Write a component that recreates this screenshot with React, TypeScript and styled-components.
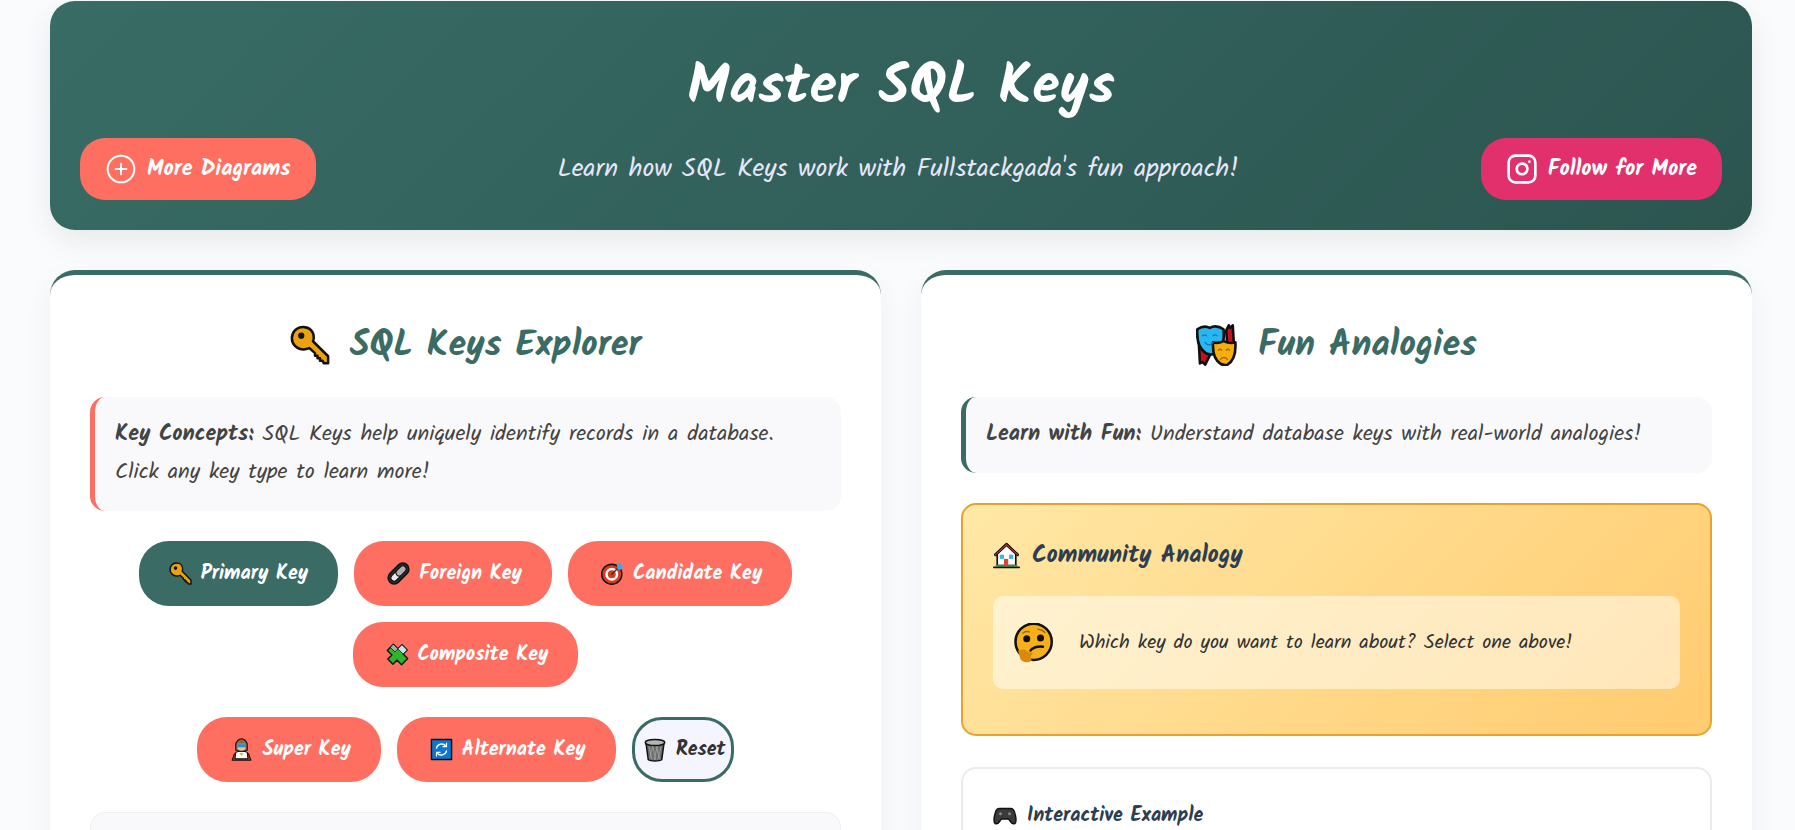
import type { ReactNode } from 'react'
import styled, { createGlobalStyle } from 'styled-components'
import { CirclePlus, Instagram } from 'lucide-react'

const GlobalStyle = createGlobalStyle`
  html, body {
    margin: 0;
    height: 830px;
    overflow: hidden;
    background: #fafbfd;
    font-family: "Kalam", "Lato", "Open Sans", sans-serif;
    color: #444;
  }
  * { box-sizing: border-box; }
`

const Page = styled.div`
  padding: 1px 43px 0 50px;
`

const Header = styled.header`
  height: 229px;
  margin-bottom: 40px;
  padding: 0 30px 30px;
  border-radius: 25px;
  background: linear-gradient(135deg, #386c65 0%, #2c5550 100%);
  box-shadow: 0 10px 30px rgba(0, 0, 0, 0.08);
  display: flex;
  flex-direction: column;
  justify-content: flex-end;
`

const Title = styled.h1`
  margin: 0 0 16px;
  text-align: center;
  color: #fff;
  font-size: 56px;
  line-height: 68px;
  font-weight: 700;
`

const HeaderRow = styled.div`
  display: flex;
  align-items: center;
  justify-content: space-between;
`

const NavLink = styled.a<{ $bg: string }>`
  display: flex;
  align-items: center;
  gap: 10px;
  height: 62px;
  padding: 0 25px;
  border-radius: 25px;
  background: ${p => p.$bg};
  color: #fff;
  font-size: 22px;
  font-weight: 700;
  white-space: nowrap;
`

const Subtitle = styled.p`
  margin: 0;
  color: #e6e6fa;
  font-size: 26px;
`

const Columns = styled.div`
  display: grid;
  grid-template-columns: 1fr 1fr;
  gap: 40px;
`

const Card = styled.section`
  height: 900px;
  padding: 40px;
  border-top: 5px solid #3a6b65;
  border-radius: 25px;
  background: #fff;
  box-shadow: 0 10px 30px rgba(0, 0, 0, 0.05);
`

const CardTitle = styled.h2`
  display: flex;
  align-items: center;
  justify-content: center;
  gap: 20px;
  height: 60px;
  margin: 0 0 22px;
  color: #3a6b65;
  font-size: 36px;
  font-weight: 700;
`

const Note = styled.p<{ $accent: string }>`
  margin: 0 0 30px;
  padding: 19px 20px;
  border-left: 5px solid ${p => p.$accent};
  border-radius: 15px;
  background: #f9f9fb;
  font-size: 22px;
  line-height: 38px;
`

const ButtonGroup = styled.div`
  display: flex;
  flex-wrap: wrap;
  justify-content: center;
  gap: 16px;
  margin-bottom: 30px;
`

const KeyButton = styled.button<{ $active?: boolean }>`
  display: flex;
  align-items: center;
  gap: 9px;
  height: 65px;
  padding: 0 30px 0 ${p => (p.$active ? '30px' : '33px')};
  border: 0;
  border-radius: 30px;
  background: ${p => (p.$active ? '#3a6b65' : '#ff6f61')};
  color: #fff;
  font: inherit;
  font-size: 20px;
  font-weight: 700;
  white-space: nowrap;
`

const ResetButton = styled(KeyButton)`
  padding: 0 5px 0 8px;
  border: 3px solid #3a6b65;
  background: #f5f5ff;
  color: #333;
`

const ExplainPanel = styled.div`
  height: 300px;
  border: 1px solid #eef0f4;
  border-radius: 15px;
  background: #f9f9fb;
`

const AnalogyCard = styled.div`
  height: 233px;
  margin-bottom: 31px;
  padding: 30px;
  border: 2px solid #e9a22f;
  border-radius: 15px;
  background: linear-gradient(135deg, #ffe8a6 0%, #ffcb6f 100%);
`

const AnalogyTitle = styled.h3`
  display: flex;
  align-items: center;
  gap: 12px;
  height: 40px;
  margin: 0 0 21px;
  color: #2c3e50;
  font-size: 24px;
  font-weight: 700;
`

const Bubble = styled.div`
  display: flex;
  align-items: center;
  gap: 26px;
  height: 93px;
  padding: 0 20px;
  border-radius: 10px;
  background: rgba(255, 255, 255, 0.5);
  color: #333;
  font-size: 20px;
`

const ExampleCard = styled.div`
  height: 300px;
  padding: 32px 30px;
  border: 2px solid #e9ecef;
  border-radius: 15px;
  background: #fff;
`

const ExampleTitle = styled.h4`
  display: flex;
  align-items: center;
  gap: 10px;
  height: 30px;
  margin: 0;
  color: #2c3e50;
  font-size: 20px;
  font-weight: 700;
`

const Ink = styled.svg`
  flex: none;
  display: block;
  stroke: #111;
  stroke-width: 2;
  stroke-linejoin: round;
  stroke-linecap: round;
`

const Glyph = ({ size, children }: { size: number; children: ReactNode }) => (
  <Ink width={size} height={size} viewBox="0 0 32 32" fill="none">{children}</Ink>
)

const KeyIcon = ({ size = 23 }: { size?: number }) => (
  <Glyph size={size}>
    <path fill="#eaa30e" d="M10.5 1.500C15.500 1.500 19 5 19 10c0 1-.2 2-.6 3L30.500 25v5.500h-3.500l-1-2h-2v-2h-2v-2h-2v-2l-4.500-4c-1.500.6-3 1-4.500 1C5 19.500 1.500 15 1.500 10.500 1.500 6 5 1.500 10.500 1.500Z" />
    <circle cx="9" cy="8.500" r="1.500" fill="#111" />
  </Glyph>
)

const LinkIcon = ({ size = 23 }: { size?: number }) => (
  <Glyph size={size}>
    <g transform="rotate(-45 16 16)">
      <rect x="-1" y="7.500" width="34" height="17" rx="8.500" fill="#2a2a2a" />
      <rect x="3" y="11.500" width="16" height="9" rx="4.500" fill="#e8e8e8" strokeWidth="1.500" />
      <rect x="13" y="11.500" width="16" height="9" rx="4.500" fill="#b0b0b0" strokeWidth="1.500" />
    </g>
  </Glyph>
)

const TargetIcon = ({ size = 23 }: { size?: number }) => (
  <Glyph size={size}>
    <circle cx="15" cy="17" r="14" fill="#d9391e" />
    <circle cx="15" cy="17" r="9" fill="#fff" stroke="none" />
    <circle cx="15" cy="17" r="5.500" fill="#d9391e" stroke="none" />
    <path d="M15 17 25 7" stroke="#333" />
    <path fill="#3aa9e8" stroke="none" d="M22 4l5-3 1 4 3 1-4 5-4-1z" />
  </Glyph>
)

const PuzzleIcon = ({ size = 23 }: { size?: number }) => (
  <Glyph size={size}>
    <g transform="rotate(45 16 16)">
      <path fill="#2fb52a" d="M11 2h10v8h9v12h-9v8H11v-8H2V10h9z" />
      <path fill="#cfe0e6" strokeWidth="1" d="M11 2h10v8H11z" />
      <path fill="#9fb0a8" strokeWidth="1" d="M2 10h9v6H2z" />
    </g>
  </Glyph>
)

const HeroIcon = ({ size = 23 }: { size?: number }) => (
  <Glyph size={size}>
    <path fill="#d8352a" strokeWidth="1.500" d="M6 22 3 31h26l-3-9z" />
    <path fill="#fff" strokeWidth="1.500" d="M8 20c4-2 12-2 16 0l1 9H7z" />
    <path fill="#e8b020" stroke="none" d="M13 21h6l-3 4z" />
    <path fill="#9a6238" strokeWidth="1.500" d="M8 10c0-5 4-9 8-9s8 4 8 9v7c-1 1-2 1-3 1H11c-1 0-2 0-3-1z" />
    <path fill="#efc096" stroke="none" d="M10.500 8h11v7c-2 3.500-9 3.500-11 0z" />
    <path fill="#2a8fd6" stroke="none" d="M10 8.500h12v4.500H10z" />
  </Glyph>
)

const ArrowsIcon = ({ size = 23 }: { size?: number }) => (
  <Glyph size={size}>
    <rect x="2" y="2" width="28" height="28" fill="#0a78d2" />
    <path d="M9 14a7.500 7.500 0 0 1 13-3M23 18a7.500 7.500 0 0 1-13 3" stroke="#fff" />
    <path d="M23 7v5h-5M9 25v-5h5" stroke="#fff" strokeWidth="1.500" />
  </Glyph>
)

const BinIcon = ({ size = 24 }: { size?: number }) => (
  <Glyph size={size}>
    <path fill="#6d6d6d" d="M4 7l3 22c3 2 15 2 18 0l3-22z" />
    <path stroke="#a5a5a5" strokeWidth="1" d="M8 12l4 16M13 11l4 18M18 11l4 17M24 12l-4 16M19 11l-4 18M13 11l-4 16" />
    <ellipse cx="16" cy="6" rx="13" ry="4" fill="#b5b5b5" />
  </Glyph>
)

const MasksIcon = ({ size = 42 }: { size?: number }) => (
  <Glyph size={size}>
    <path fill="#c8101f" d="M2 11 3 30l2-1 2 2 4-8zM23 5l2-4 1 2 2-2 1 17h-5z" />
    <path fill="#2ab7f0" d="M1 4C4 2 7 1 10.500 3 14 1 18 2 21 4c.5 8 0 14-5 18-2 1.500-6 1.500-8 .5C2 19 .5 11 1 4Z" />
    <path fill="#f6ae0c" d="M13 14c3 1 5 .5 8-1 3 1.500 6 2 9 1 .5 8-1 14-6 17-2 .5-3 .5-5-.5-5-3-6.500-9-6-16.500Z" />
    <path stroke="#0a78c8" strokeWidth="1" d="M5 9c1-1 2-1 3 0M13 9c1-1 2-1 3 0M7 14c1 2 4 3 6 0" />
    <path stroke="#a86a00" strokeWidth="1" d="M17 20c1-1 2-1 2.500 0M23 20c1-1 2-1 2.500 0M18.500 27c1.500-2 4-2 5.500 0" />
  </Glyph>
)

const HouseIcon = ({ size = 27 }: { size?: number }) => (
  <Glyph size={size}>
    <path fill="#fff" d="M5 13v15h22V13L16 2z" />
    <path stroke="#111" strokeWidth="3.500" d="M3 15 16 3l13 12" />
    <path stroke="#c0392b" strokeWidth="1.300" d="M3 15 16 3l13 12" />
    <path d="M1 30h30" stroke="#111" strokeWidth="2" />
    <path d="M4 28h24" stroke="#2d9c43" strokeWidth="2" />
    <rect x="8" y="15" width="5" height="5" fill="#39b6e6" stroke="none" />
    <rect x="19" y="15" width="5" height="5" fill="#39b6e6" stroke="none" />
    <rect x="13" y="20" width="5" height="8" fill="#e0442c" stroke="none" />
  </Glyph>
)

const ThinkingIcon = ({ size = 40 }: { size?: number }) => (
  <Glyph size={size}>
    <circle cx="16.500" cy="15" r="14.500" fill="#f6b11a" />
    <path stroke="#a06a00" strokeWidth="1.200" d="M8 8c1.500-1.500 3-1.500 5-1M20 5c2 0 4 1 5.500 2.500" />
    <circle cx="11" cy="12.500" r="1.800" fill="#111" />
    <circle cx="22" cy="12" r="1.800" fill="#111" />
    <path strokeWidth="2" d="M14 22c1-2 6-4 10-3" />
    <path fill="#d8890f" stroke="none" d="M4 22l5-1 3 2 4 1-2 3 1 3c-2 2-7 2-9-1z" />
  </Glyph>
)

const GamepadIcon = ({ size = 24 }: { size?: number }) => (
  <Glyph size={size}>
    <path fill="#3b3b3b" d="M8 6h16c3 0 5 4 6 10 1 5 1 9-1 10-2 1-4 0-6-3-1-2-2-3-3-3h-8c-1 0-2 1-3 3-2 3-4 4-6 3-2-1-2-5-1-10C3 10 5 6 8 6Z" />
    <circle cx="10" cy="13" r="2" fill="#888" stroke="none" />
    <circle cx="22" cy="13" r="2" fill="#888" stroke="none" />
  </Glyph>
)

const App = () => (
  <>
    <GlobalStyle />
    <Page>
      <Header>
        <Title>Master SQL Keys</Title>
        <HeaderRow>
          <NavLink $bg="#ff6f61">
            <CirclePlus size={32} strokeWidth={1.5} />
            More Diagrams
          </NavLink>
          <Subtitle>Learn how SQL Keys work with Fullstackgada's fun approach!</Subtitle>
          <NavLink $bg="#e1306c">
            <Instagram size={32} strokeWidth={2} />
            Follow for More
          </NavLink>
        </HeaderRow>
      </Header>
      <Columns>
        <Card>
          <CardTitle><KeyIcon size={40} />SQL Keys Explorer</CardTitle>
          <Note $accent="#ff6f61">
            <strong>Key Concepts:</strong> SQL Keys help uniquely identify records in a database. Click any key type to learn more!
          </Note>
          <ButtonGroup>
            <KeyButton $active><KeyIcon />Primary Key</KeyButton>
            <KeyButton><LinkIcon />Foreign Key</KeyButton>
            <KeyButton><TargetIcon />Candidate Key</KeyButton>
            <KeyButton><PuzzleIcon />Composite Key</KeyButton>
          </ButtonGroup>
          <ButtonGroup>
            <KeyButton><HeroIcon />Super Key</KeyButton>
            <KeyButton><ArrowsIcon />Alternate Key</KeyButton>
            <ResetButton><BinIcon />Reset</ResetButton>
          </ButtonGroup>
          <ExplainPanel />
        </Card>
        <Card>
          <CardTitle><MasksIcon />Fun Analogies</CardTitle>
          <Note $accent="#3a6b65">
            <strong>Learn with Fun:</strong> Understand database keys with real-world analogies!
          </Note>
          <AnalogyCard>
            <AnalogyTitle><HouseIcon />Community Analogy</AnalogyTitle>
            <Bubble><ThinkingIcon />Which key do you want to learn about? Select one above!</Bubble>
          </AnalogyCard>
          <ExampleCard>
            <ExampleTitle><GamepadIcon />Interactive Example</ExampleTitle>
          </ExampleCard>
        </Card>
      </Columns>
    </Page>
  </>
)

export default App
